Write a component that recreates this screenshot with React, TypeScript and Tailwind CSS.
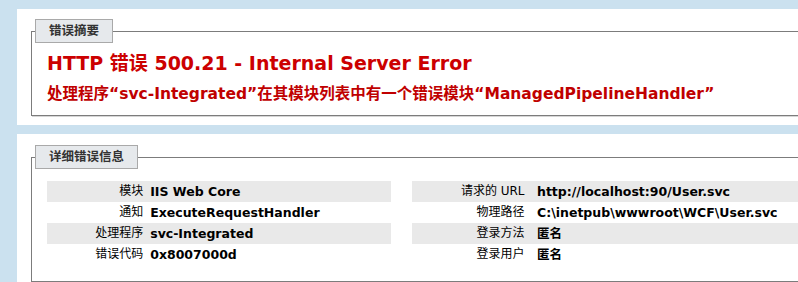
const font = "font-['DejaVu_Sans','Noto_Sans_CJK_SC',sans-serif]";

const leftRows = [
  ["模块", "IIS Web Core"],
  ["通知", "ExecuteRequestHandler"],
  ["处理程序", "svc-Integrated"],
  ["错误代码", "0x8007000d"],
];

const rightRows = [
  ["请求的 URL", "http://localhost:90/User.svc"],
  ["物理路径", "C:\\inetpub\\wwwroot\\WCF\\User.svc"],
  ["登录方法", "匿名"],
  ["登录用户", "匿名"],
];

function DetailTable({ rows, labelWidth }: { rows: string[][]; labelWidth: string }) {
  return (
    <table className="w-full border-collapse">
      <tbody>
        {rows.map(([label, value], i) => (
          <tr key={label} className={i % 2 === 0 ? "bg-[#e9e9e9]" : ""}>
            <th
              className={`${labelWidth} py-[3px] pr-[2%] text-right align-top font-normal text-[12px] leading-[15px] text-black`}
            >
              {label}
            </th>
            <td className="py-[3px] text-left align-top font-bold text-[12.5px] leading-[15px] text-black whitespace-nowrap">
              {value}
            </td>
          </tr>
        ))}
      </tbody>
    </table>
  );
}

function Legend({ children }: { children: string }) {
  return (
    <legend className="-ml-[12px] h-[24px] px-[13px] border border-[#a9a9a9] bg-[#e6e9ec] text-[12.5px] leading-[22px] font-bold text-[#333]">
      {children}
    </legend>
  );
}

export default function App() {
  return (
    <div className={`${font} w-[798px] h-[282px] overflow-hidden bg-[#cbe1ef]`}>
      {/* 错误摘要 */}
      <div className="ml-[17px] mt-[9px] w-[1060px] bg-white pt-[10px] pb-[9px] pl-[14px]">
        <fieldset className="border border-[#7c7c7c] shadow-[1px_1px_0_#d6d6d6] px-[15px] pb-[11px]">
          <Legend>错误摘要</Legend>
          <h2 className="mt-[8px] text-[19px] leading-[24px] font-bold text-[#cc0000]">
            HTTP 错误 500.21 - Internal Server Error
          </h2>
          <h3 className="mt-[10px] text-[15.5px] leading-[19px] font-bold text-[#c00000]">
            处理程序“svc-Integrated”在其模块列表中有一个错误模块“ManagedPipelineHandler”
          </h3>
        </fieldset>
      </div>

      {/* 详细错误信息 */}
      <div className="ml-[17px] mt-[9px] w-[1060px] bg-white pt-[11px] pb-[10px] pl-[14px]">
        <fieldset className="border border-[#7c7c7c] shadow-[1px_1px_0_#d6d6d6] px-[15px] pb-[16px]">
          <Legend>详细错误信息</Legend>
          <div className="mt-[12px] flex gap-[21px]">
            <div className="w-[344px] shrink-0">
              <DetailTable rows={leftRows} labelWidth="w-[30%]" />
            </div>
            <div className="w-[625px] shrink-0">
              <DetailTable rows={rightRows} labelWidth="w-[20%]" />
            </div>
          </div>
        </fieldset>
      </div>
    </div>
  );
}
